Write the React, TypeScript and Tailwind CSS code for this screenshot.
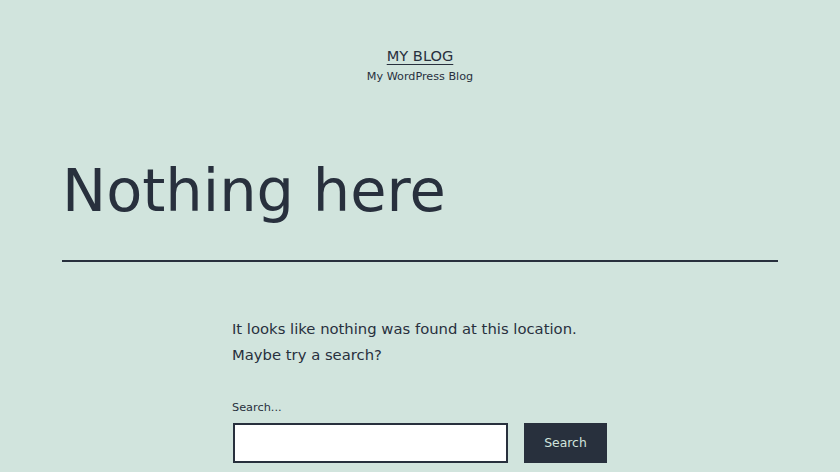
import React from 'react';

export default function App() {
  return (
    <div className="min-h-screen bg-[#d1e4dd] text-[#28303d] font-['DejaVu_Sans',sans-serif] overflow-hidden h-[472px]">
      {/* header */}
      <header className="flex flex-col items-center pt-[46px]">
        <a href="#" className="text-[14.6px] leading-[20px] underline underline-offset-[3px] decoration-1">
          MY BLOG
        </a>
        <p className="text-[11.2px] leading-[16px] mt-[3px]">My WordPress Blog</p>
      </header>

      {/* page title */}
      <div className="mx-[62px] mt-[68px] border-b-2 border-[#28303d] pb-[31px]">
        <h1 className="text-[59px] leading-[76px] font-normal">Nothing here</h1>
      </div>

      {/* content */}
      <div className="w-[376px] mx-auto mt-[54px]">
        <p className="text-[14.8px] leading-[26px]">
          It looks like nothing was found at this location. Maybe try a search?
        </p>
        <form className="mt-[32px]" onSubmit={(e) => e.preventDefault()}>
          <label className="block text-[11.3px] leading-[16px] mb-[7px]">Search...</label>
          <div className="flex gap-[16px] ml-[1px]">
            <input
              type="search"
              className="w-[275px] h-[40px] bg-white border-2 border-[#28303d] outline-none px-2"
            />
            <button className="w-[83px] h-[40px] bg-[#28303d] text-[#d1e4dd] text-[12.4px]">
              Search
            </button>
          </div>
        </form>
      </div>
    </div>
  );
}
